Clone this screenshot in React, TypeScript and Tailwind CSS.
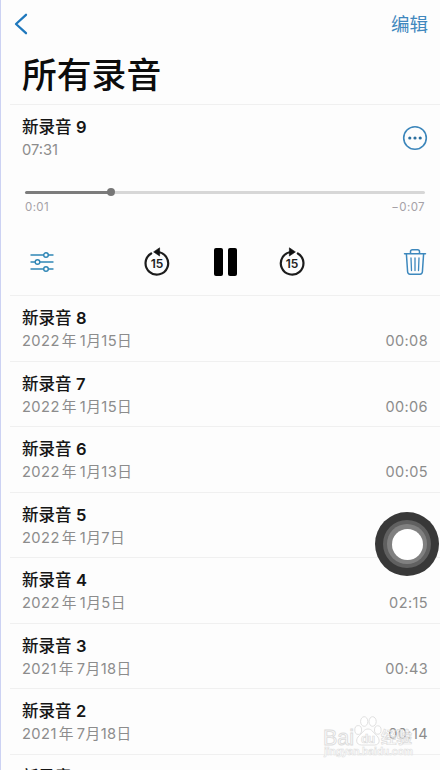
import React from "react"

const recordings = [
  { number: "8", year: "2022", day: "1月15日", length: "00:08" },
  { number: "7", year: "2022", day: "1月15日", length: "00:06" },
  { number: "6", year: "2022", day: "1月13日", length: "00:05" },
  { number: "5", year: "2022", day: "1月7日", length: "" },
  { number: "4", year: "2022", day: "1月5日", length: "02:15" },
  { number: "3", year: "2021", day: "7月18日", length: "00:43" },
  { number: "2", year: "2021", day: "7月18日", length: "00:14" },
  { number: "", year: "", day: "", length: "" },
]

function RecordingTitle({ number }: { number: string }) {
  return (
    <h2 className="text-[16.5px] font-medium leading-[23px] text-[#151515]">
      新录音 <span className="font-semibold">{number}</span>
    </h2>
  )
}

function SkipIcon({ forward = false }: { forward?: boolean }) {
  return (
    <svg viewBox="0 0 28 30" className="h-[30px] w-7" fill="none">
      <g transform={forward ? "matrix(-1 0 0 1 28 0)" : undefined}>
        <path d="M14.5 5A11.3 11.3 0 1 1 8.2 6.5" stroke="#1c1c1c" strokeWidth="2.2" strokeLinecap="round" />
        <path d="M10.6 4.9L16.6 0.8V9Z" fill="#111" stroke="#111" strokeWidth="0.6" strokeLinejoin="round" />
      </g>
      <text x="14" y="20.7" textAnchor="middle" fontSize="12" fontWeight="600" fill="#222" fontFamily="Inter, sans-serif">
        15
      </text>
    </svg>
  )
}

function SlidersIcon() {
  return (
    <svg viewBox="0 0 24 20" className="h-5 w-6" fill="none" stroke="#2f86b5" strokeWidth="1.4" strokeLinecap="round">
      <path d="M1 3H13.5M18.5 3H23M1 10H5M10 10H23M1 17H13.5M18.5 17H23" />
      <circle cx="16" cy="3" r="2.3" />
      <circle cx="7.5" cy="10" r="2.3" />
      <circle cx="16" cy="17" r="2.3" />
    </svg>
  )
}

function TrashIcon() {
  return (
    <svg viewBox="0 0 24 28" className="h-7 w-6" fill="none" stroke="#3d88bd" strokeWidth="1.5" strokeLinecap="round" strokeLinejoin="round">
      <path d="M1.5 5.8H22.5M7.5 5.5V3.6Q7.5 1.7 9.4 1.7H14.6Q16.5 1.7 16.5 3.6V5.5" />
      <path d="M3.4 6L4.6 23.8Q4.8 26.2 7 26.2H17Q19.2 26.2 19.4 23.8L20.6 6" />
      <path d="M8 10L8.5 22.5M12 10V22.5M16 10L15.5 22.5" strokeWidth="1.3" />
    </svg>
  )
}

function Watermark() {
  return (
    <svg viewBox="0 0 92 44" className="absolute left-[322px] top-[714px] h-11 w-[92px]" fill="#fff" stroke="#dcdcdc" strokeWidth="0.9" fontFamily="'Liberation Sans', 'Noto Sans CJK SC', sans-serif" fontWeight="700">
      <text x="0" y="30.5" fontSize="21.5" fontWeight="400" fillOpacity="0.7" textLength="31">Bai</text>
      <g fillOpacity="0.8">
        <ellipse cx="35.2" cy="16" rx="3.4" ry="4.4" />
        <ellipse cx="41.2" cy="7.5" rx="3.6" ry="4.8" />
        <ellipse cx="49.6" cy="7.5" rx="3.6" ry="4.8" />
        <ellipse cx="54.8" cy="16" rx="3.3" ry="4.2" />
        <path d="M45 15C41 15 40 18.5 36.5 21.5C32 25 33 31 38.5 31H51.5C57 31 57.5 25 53.5 21.5C50 18.5 49 15 45 15Z" />
      </g>
      <text x="38" y="28.5" fontSize="12" textLength="14" strokeWidth="0.7">du</text>
      <text x="58" y="29" fontSize="15.5" fillOpacity="0.4" strokeWidth="0.7" textLength="31">经验</text>
      <text x="1" y="41" fontSize="10.5" strokeWidth="0.5" textLength="89">jingyan.baidu.com</text>
    </svg>
  )
}

export default function App() {
  return (
    <div className="relative h-[770px] w-[440px] overflow-hidden border-l border-[#ccd2f3] bg-[#fdfdfd] font-['Inter','Noto_Sans_CJK_SC',sans-serif]">
      <header className="h-[104px] pl-[21px] pr-3">
        <div className="flex h-12 items-center justify-between">
          <svg viewBox="0 0 14 22" className="-ml-2 h-[22px] w-3.5" fill="none" stroke="#1f78bd" strokeWidth="2.3" strokeLinecap="round" strokeLinejoin="round">
            <path d="M12 1.8L2 11L12 20.2" />
          </svg>
          <button className="text-[18.5px] leading-6 text-[#4088be]">编辑</button>
        </div>
        <h1 className="text-[34.8px] font-medium leading-[54px] text-[#0c0c0c]">所有录音</h1>
      </header>

      <section className="ml-[9px] h-[191px] border-t border-[#f0f0f0] pl-3 pr-3">
        <div className="flex h-[70px] justify-between">
          <div className="pt-[11px]">
            <RecordingTitle number="9" />
            <p className="text-[14.7px] leading-[23px] text-[#8c8c8c]">07:31</p>
          </div>
          <svg viewBox="0 0 26 26" className="mt-5 h-[26px] w-[26px]" fill="none">
            <circle cx="13" cy="13" r="11.3" stroke="#3c86bb" strokeWidth="1.6" />
            <g fill="#2b6f9f">
              <circle cx="7.8" cy="13" r="1.6" />
              <circle cx="13" cy="13" r="1.6" />
              <circle cx="18.2" cy="13" r="1.6" />
            </g>
          </svg>
        </div>

        <div className="mt-[13px] ml-[3px] mr-[3px] flex h-2 items-center">
          <div className="h-[3px] w-[86px] rounded-l-full bg-[#7c7c7c]" />
          <div className="-ml-1 h-2 w-2 rounded-full bg-[#777]" />
          <div className="h-[3px] flex-1 rounded-r-full bg-[#d7d7d7]" />
        </div>
        <div className="ml-[3px] mr-[3px] mt-[3px] flex justify-between text-[11.5px] leading-4 tracking-[0.4px] text-[#a5a1a7]">
          <span>0:01</span>
          <span>−0:07</span>
        </div>

        <div className="mt-8 flex h-[30px] items-center">
          <div className="ml-2 w-[113px]">
            <SlidersIcon />
          </div>
          <div className="w-[71px]">
            <SkipIcon />
          </div>
          <div className="flex w-[64px] gap-[5px]">
            <span className="h-[28px] w-[9px] rounded-[2px] bg-black" />
            <span className="h-[28px] w-[9px] rounded-[2px] bg-black" />
          </div>
          <div>
            <SkipIcon forward />
          </div>
          <div className="ml-auto mr-px">
            <TrashIcon />
          </div>
        </div>
      </section>

      <ul className="ml-[9px]">
        {recordings.map((item) => (
          <li key={item.number} className="flex h-[65.5px] justify-between border-t border-[#f0f0f0] pl-3 pr-3">
            <div className="pt-[11px]">
              <RecordingTitle number={item.number} />
              {item.year && (
                <p className="flex text-[14.7px] leading-[22px] tracking-[0.4px] text-[#8c8c8c]">
                  <span className="mr-0.5">{item.year}</span>
                  <span className="mr-[3px]">年</span>
                  <span>{item.day}</span>
                </p>
              )}
            </div>
            <span className="mt-[34px] text-[14.5px] leading-[22px] tracking-[0.4px] text-[#8c8c8c]">{item.length}</span>
          </li>
        ))}
      </ul>

      <div className="absolute left-[374px] top-[512px] flex h-16 w-16 items-center justify-center rounded-full bg-[#383838]">
        <div className="flex h-12 w-12 items-center justify-center rounded-full bg-[#606060]">
          <div className="flex h-10 w-10 items-center justify-center rounded-full bg-[#808080]">
            <div className="h-[31px] w-[31px] rounded-full bg-white" />
          </div>
        </div>
      </div>
      <Watermark />
    </div>
  )
}
